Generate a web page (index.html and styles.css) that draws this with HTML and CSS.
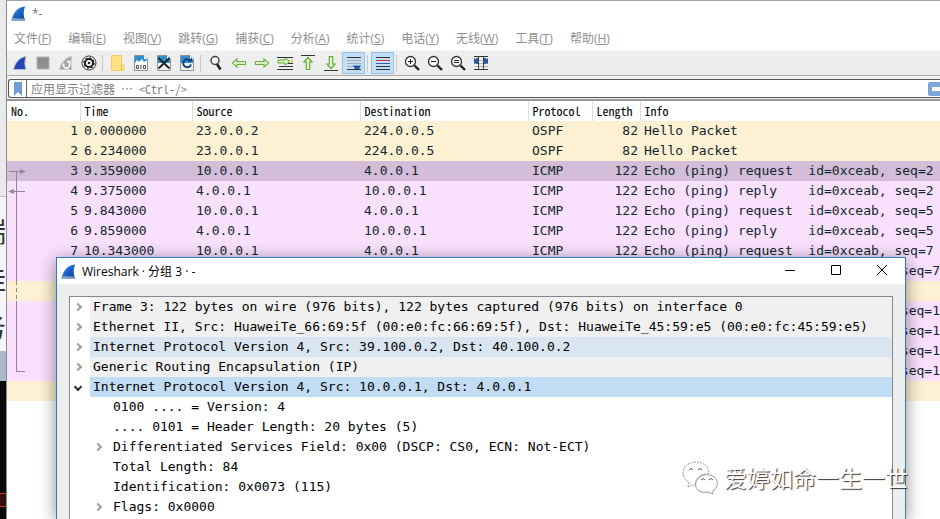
FILE: index.html
```html
<!DOCTYPE html>
<html lang="zh-CN">
<head>
    <meta charset="utf-8">
    <title>*-</title>
    <link rel="stylesheet" href="styles.css">
</head>
<body>
<svg class="defs" aria-hidden="true">
  <defs>
    <linearGradient id="blue" x1="0" y1="0" x2="1" y2="1">
      <stop offset="0" stop-color="#4fa3ee"/>
      <stop offset="0.5" stop-color="#1763c8"/>
      <stop offset="1" stop-color="#0a3f9c"/>
    </linearGradient>
    <symbol id="fin" viewBox="0 0 16 16">
      <path d="M0.500 15.500C2 8 6 1.500 15 0.500C13 5 13 10 15 15.500Z" fill="url(#blue)"/>
      <path d="M0.500 15.500L2 12.500C6 13.500 11 13 14.300 13.500L15 15.500Z" fill="#8a9cc0"/>
    </symbol>
    <symbol id="file" viewBox="0 0 16 16">
      <path d="M1.500 0.500H11L14.500 4V15.500H1.500Z" fill="#f4f6ee" stroke="#8b9398"/>
      <path d="M2 1H11L14 4V8H2Z" fill="#2f8fd0"/>
      <path d="M11 0.500V4H14.500Z" fill="#fff"/>
    </symbol>
    <symbol id="lens" viewBox="0 0 16 16">
      <circle cx="6.500" cy="6.500" r="5" fill="#fff" stroke="#333" stroke-width="1.300"/>
      <path d="M10.500 10.500L15 15" stroke="#222" stroke-width="2.400"/>
    </symbol>
    <symbol id="arrow" viewBox="0 0 16 16">
      <path d="M1.500 8L6 4V6.500H14.500V9.500H6V12Z" fill="#fff" stroke="#6ab33a" stroke-width="1.200"/>
      <path d="M4 8H13" stroke="#a9dc80"/>
    </symbol>
  </defs>
</svg>

<div class="screen">
  <div class="behind">
    <div class="behind-top"></div>
    <div class="behind-text"><span>端</span><span>挂</span><span>务</span></div>
    <div class="behind-bar"></div>
    <div class="behind-term"></div>
  </div>

  <main class="window">
    <header class="titlebar">
      <svg class="logo"><use href="#fin"/></svg>
      <span>*-</span>
    </header>

    <nav class="menu">
      <a href="#">文件(<u>F</u>)</a>
      <a href="#">编辑(<u>E</u>)</a>
      <a href="#">视图(<u>V</u>)</a>
      <a href="#">跳转(<u>G</u>)</a>
      <a href="#">捕获(<u>C</u>)</a>
      <a href="#">分析(<u>A</u>)</a>
      <a href="#">统计(<u>S</u>)</a>
      <a href="#">电话(<u>Y</u>)</a>
      <a href="#">无线(<u>W</u>)</a>
      <a href="#">工具(<u>T</u>)</a>
      <a href="#">帮助(<u>H</u>)</a>
    </nav>

    <div class="toolbar">
      <button type="button" aria-label="start"><svg viewBox="0 0 16 16"><path d="M1.500 14.500C3 8 7 2.500 14 1.500C12.500 6 12.500 10 14 14.500Z" fill="#2546b8" stroke="#b9bcc6"/></svg></button>
      <button type="button" aria-label="stop"><svg viewBox="0 0 16 16"><path d="M2 2H14V14H2Z" fill="#8e8e8e" stroke="#b5b5b5"/></svg></button>
      <button type="button" aria-label="restart"><svg viewBox="0 0 16 16"><path d="M1.500 14.500C3 8 7 2.500 14 1.500C12.500 6 12.500 10 14 14.500Z" fill="#a5a5a5" stroke="#c8c8c8"/><path d="M6 8.500A3 3 0 1 0 11 8.500M9 6.500H11.500V9" fill="none" stroke="#fff" stroke-width="1.500"/></svg></button>
      <button type="button" aria-label="options"><svg viewBox="0 0 16 16"><circle cx="8" cy="8" r="7" fill="#fff" stroke="#333"/><circle cx="8" cy="8" r="4" fill="none" stroke="#222" stroke-width="2"/><circle cx="8" cy="8" r="5" fill="none" stroke="#222" stroke-width="1.500" stroke-dasharray="2 1.900"/><circle cx="8" cy="8" r="1.300" fill="#222"/></svg></button>
      <span class="sep"></span>
      <button type="button" aria-label="open"><svg viewBox="0 0 16 16"><path d="M1.500 0.500H11.500V10H14V15.500H1.500Z" fill="#ffe082" stroke="#f0cc62"/><path d="M11.500 10V15.500" stroke="#dfb84c"/></svg></button>
      <button type="button" aria-label="save"><svg viewBox="0 0 16 16"><use href="#file"/><path d="M2 8L4 5L6 7L9 4L11 7L14 5V9H2Z" fill="#fff"/><path d="M3.500 10.500H5.500V13.500H3.500ZM8 10V14M10.500 10.500H12.500V13.500H10.500Z" fill="none" stroke="#555"/></svg></button>
      <button type="button" aria-label="close"><svg viewBox="0 0 16 16"><use href="#file"/><path d="M2.500 3L13.500 13.500M13.500 3L2.500 13.500" stroke="#222" stroke-width="2"/></svg></button>
      <button type="button" aria-label="reload"><svg viewBox="0 0 16 16"><use href="#file"/><path d="M11.500 6A4 4 0 1 0 12 9.500" fill="none" stroke="#153f7c" stroke-width="2"/><path d="M8.500 6.500H13V2.500Z" fill="#153f7c"/></svg></button>
      <span class="sep"></span>
      <button type="button" aria-label="find"><svg viewBox="0 0 16 16"><circle cx="7" cy="5.500" r="4" fill="#f4f4f4" stroke="#444" stroke-width="1.500"/><path d="M9 9L12.500 14.500" stroke="#222" stroke-width="2.500"/></svg></button>
      <button type="button" aria-label="back"><svg><use href="#arrow"/></svg></button>
      <button type="button" aria-label="forward"><svg viewBox="0 0 16 16"><g transform="rotate(180 8 8)"><use href="#arrow"/></g></svg></button>
      <button type="button" aria-label="go to"><svg viewBox="0 0 16 16"><path d="M0 2.500H16M2 11.500H16M0 14.500H16M11 8.500H16" stroke="#333"/><path d="M14 6H16" stroke="#e6cf3a" stroke-width="3"/><path d="M1 5H8V3L13 6.500L8 10V8H1Z" fill="#d9f0c8" stroke="#5fae2d"/></svg></button>
      <button type="button" aria-label="first"><svg viewBox="0 0 16 16"><path d="M1 0.500H15" stroke="#333"/><path d="M8 2.500L12 7H9.700V14.500H6.300V7H4Z" fill="#e8f7dc" stroke="#5fae2d" stroke-width="1.200"/></svg></button>
      <button type="button" aria-label="last"><svg viewBox="0 0 16 16"><path d="M1 15.500H15" stroke="#333"/><path d="M8 13.500L12 9H9.700V1.500H6.300V9H4Z" fill="#e8f7dc" stroke="#5fae2d" stroke-width="1.200"/></svg></button>
      <button type="button" class="on" aria-label="auto scroll"><svg viewBox="0 0 16 16"><path d="M1 2.500H15M1 14.500H15" stroke="#333"/><path d="M1 5.500H15M1 8.500H15M1 11.500H8" stroke="#a7adb0"/><path d="M7 10.500H15L13 14H9Z" fill="#2a56a8"/></svg></button>
      <span class="sep"></span>
      <button type="button" class="on" aria-label="colorize"><svg viewBox="0 0 16 16"><path d="M1 2.500H15M1 14.500H15M1 11.500H15" stroke="#333"/><path d="M1 5.500H15" stroke="#e02a3a"/><path d="M1 8.500H15" stroke="#3a58b8"/></svg></button>
      <span class="sep"></span>
      <button type="button" aria-label="zoom in"><svg viewBox="0 0 16 16"><use href="#lens"/><path d="M4 6.500H9M6.500 4V9" stroke="#222"/></svg></button>
      <button type="button" aria-label="zoom out"><svg viewBox="0 0 16 16"><use href="#lens"/><path d="M4 6.500H9" stroke="#222"/></svg></button>
      <button type="button" aria-label="normal size"><svg viewBox="0 0 16 16"><use href="#lens"/><path d="M4 5.500H9M4 7.500H9" stroke="#222"/></svg></button>
      <button type="button" aria-label="resize columns"><svg viewBox="0 0 16 16"><path d="M1 1.500H15M1 14.500H15" stroke="#333"/><path d="M1 5.500H15M1 8.500H15M1 11.500H15" stroke="#b5b5b5"/><path d="M5.500 1V15M10.500 1V15" stroke="#444"/><path d="M1 3L5 6L1 9ZM15 3L11 6L15 9ZM5 3V9H3V3ZM11 3V9H13V3Z" fill="#2d55aa"/></svg></button>
    </div>

    <form class="filter">
      <div class="filter-box">
        <button type="button" class="bookmark" aria-label="bookmarks"><svg viewBox="0 0 10 14"><path d="M1 0H9V14L5 10L1 14Z" fill="#6f9cd2"/></svg></button>
        <input type="text" aria-label="filter" placeholder="应用显示过滤器 … &lt;Ctrl-/&gt;">
        <button type="button" class="apply" aria-label="apply"></button>
      </div>
    </form>

    <div class="packets">
      <table>
        <colgroup>
          <col class="c-no"><col class="c-time"><col class="c-addr"><col class="c-addr"><col class="c-proto"><col class="c-len"><col>
        </colgroup>
        <thead>
          <tr><th>No.</th><th>Time</th><th>Source</th><th>Destination</th><th>Protocol</th><th>Length</th><th>Info</th></tr>
        </thead>
        <tbody>
          <tr class="ospf"><td>1</td><td>0.000000</td><td>23.0.0.2</td><td>224.0.0.5</td><td>OSPF</td><td>82</td><td>Hello Packet</td></tr>
          <tr class="ospf"><td>2</td><td>6.234000</td><td>23.0.0.1</td><td>224.0.0.5</td><td>OSPF</td><td>82</td><td>Hello Packet</td></tr>
          <tr class="icmp selected"><td>3</td><td>9.359000</td><td>10.0.0.1</td><td>4.0.0.1</td><td>ICMP</td><td>122</td><td>Echo (ping) request  id=0xceab, seq=2</td></tr>
          <tr class="icmp"><td>4</td><td>9.375000</td><td>4.0.0.1</td><td>10.0.0.1</td><td>ICMP</td><td>122</td><td>Echo (ping) reply    id=0xceab, seq=2</td></tr>
          <tr class="icmp"><td>5</td><td>9.843000</td><td>10.0.0.1</td><td>4.0.0.1</td><td>ICMP</td><td>122</td><td>Echo (ping) request  id=0xceab, seq=5</td></tr>
          <tr class="icmp"><td>6</td><td>9.859000</td><td>4.0.0.1</td><td>10.0.0.1</td><td>ICMP</td><td>122</td><td>Echo (ping) reply    id=0xceab, seq=5</td></tr>
          <tr class="icmp"><td>7</td><td>10.343000</td><td>10.0.0.1</td><td>4.0.0.1</td><td>ICMP</td><td>122</td><td>Echo (ping) request  id=0xceab, seq=7</td></tr>
          <tr class="icmp"><td></td><td></td><td></td><td></td><td></td><td></td><td class="tail">seq=7</td></tr>
          <tr class="ospf"><td></td><td></td><td></td><td></td><td></td><td></td><td></td></tr>
          <tr class="icmp"><td></td><td></td><td></td><td></td><td></td><td></td><td class="tail">seq=1</td></tr>
          <tr class="icmp"><td></td><td></td><td></td><td></td><td></td><td></td><td class="tail">seq=1</td></tr>
          <tr class="icmp"><td></td><td></td><td></td><td></td><td></td><td></td><td class="tail">seq=1</td></tr>
          <tr class="icmp"><td></td><td></td><td></td><td></td><td></td><td></td><td class="tail">seq=1</td></tr>
          <tr class="ospf"><td></td><td></td><td></td><td></td><td></td><td></td><td></td></tr>
        </tbody>
      </table>
      <!-- conversation marks in the No. column -->
      <svg class="related" viewBox="0 0 24 280" fill="none" stroke="#8d8699">
        <path d="M2 50.500H14M9.500 50V160M9.500 180V251M9 250.500H18M6 70.500H18"/>
        <path d="M9.500 160V180" stroke-dasharray="4 3"/>
        <path d="M13 48L19 50.500L13 53ZM7 68L1 70.500L7 73Z" fill="#8d8699" stroke="none"/>
      </svg>
    </div>
  </main>

  <section class="dialog">
    <header class="dialog-title">
      <svg class="logo"><use href="#fin"/></svg>
      <h1>Wireshark · 分组 3 · -</h1>
      <button type="button" aria-label="minimize"><svg viewBox="0 0 12 12"><path d="M1 5.500H11"/></svg></button>
      <button type="button" aria-label="maximize"><svg viewBox="0 0 12 12"><path d="M1.500 0.500H10.500V9.500H1.500Z"/></svg></button>
      <button type="button" aria-label="close"><svg viewBox="0 0 12 12"><path d="M1 0L11 10M11 0L1 10"/></svg></button>
    </header>
    <ul class="tree">
      <li class="proto closed"><span>Frame 3: 122 bytes on wire (976 bits), 122 bytes captured (976 bits) on interface 0</span></li>
      <li class="proto closed"><span>Ethernet II, Src: HuaweiTe_66:69:5f (00:e0:fc:66:69:5f), Dst: HuaweiTe_45:59:e5 (00:e0:fc:45:59:e5)</span></li>
      <li class="proto closed hover"><span>Internet Protocol Version 4, Src: 39.100.0.2, Dst: 40.100.0.2</span></li>
      <li class="proto closed"><span>Generic Routing Encapsulation (IP)</span></li>
      <li class="proto open current"><span>Internet Protocol Version 4, Src: 10.0.0.1, Dst: 4.0.0.1</span></li>
      <li class="field"><span>0100 .... = Version: 4</span></li>
      <li class="field"><span>.... 0101 = Header Length: 20 bytes (5)</span></li>
      <li class="field closed"><span>Differentiated Services Field: 0x00 (DSCP: CS0, ECN: Not-ECT)</span></li>
      <li class="field"><span>Total Length: 84</span></li>
      <li class="field"><span>Identification: 0x0073 (115)</span></li>
      <li class="field closed"><span>Flags: 0x0000</span></li>
    </ul>
  </section>

  <div class="watermark">
    <svg viewBox="0 0 38 34" fill="#fff" stroke="#999">
      <path d="M7 26L8 21.500C-2 15 1 2 14 1C24 0.500 29 8 27 13C20 12 13 18 15 24C13 24.500 12 24 11 24Z" stroke-dasharray="2 1"/>
      <path d="M32 33L27 31C18 33 13 27 15 21C18 12 33 11 36 20C37 25 35 28 32 29.500Z"/>
      <path d="M8 9Q10 6 12 9M17 9Q19 6 21 9M20 19Q22 16 24 19M28 19Q30 16 32 19" fill="none" stroke="#555"/>
    </svg>
    <span>爱婷如命一生一世</span>
  </div>
</div>
</body>
</html>
```

FILE: styles.css
```css
*,*::before {
  box-sizing: border-box;
}
body {
  margin: 0;
  font-family: "Open Sans", "Noto Sans CJK SC", sans-serif;
  font-size: 12px;
  overflow: hidden;
}
button {
  padding: 0;
  border: 0;
  background: none;
}
.defs {
  position: absolute;
  width: 0;
  height: 0;
}
.screen {
  position: relative;
  display: flex;
  height: 100vh;
  overflow: hidden;
}

/* what shows left of the window */
.behind {
  display: flex;
  flex-direction: column;
  flex: 0 0 6px;
  overflow: hidden;
  background: #f4f5f6;
}
.behind-top {
  flex: 0 0 197px;
  background: #e9eaec;
  border-bottom: 1px solid #c4c4c4;
}
.behind-text {
  display: flex;
  flex-direction: column;
  align-items: flex-end;
  flex: 0 0 153px;
  padding-top: 10px;
  font-size: 28px;
  line-height: 48px;
  color: #333;
}
.behind-bar {
  flex: 0 0 30px;
  background: #aab8cc;
}
.behind-term {
  flex: 1;
  background: linear-gradient(#0a0a0a 0 112px, #c33 112px 113px, #311 113px 125px, #c33 125px 126px, #0a0a0a 126px);
}

.window {
  flex: 1;
  min-width: 0;
  overflow: hidden;
  background: #fff;
  border-top: 1px solid #a3a3a3;
  border-left: 1px solid #8a8a8a;
}
.titlebar {
  display: flex;
  align-items: center;
  gap: 6px;
  height: 25px;
  padding-left: 4px;
  color: #777;
}
.logo {
  width: 15px;
  height: 15px;
}
.menu {
  display: flex;
  gap: 17px;
  height: 24px;
  padding-left: 7px;
  line-height: 26px;
}
.menu a {
  color: #8f8f8f;
  text-decoration: none;
  white-space: nowrap;
}

.toolbar {
  display: flex;
  align-items: center;
  height: 26px;
  padding-left: 1px;
  background: #eee;
  border-top: 1px solid #f6f6f6;
  border-bottom: 1px solid #a8a8a8;
}
.toolbar button {
  display: flex;
  align-items: center;
  justify-content: center;
  flex: 0 0 23px;
  height: 22px;
}
.toolbar svg {
  width: 16px;
  height: 16px;
}
.toolbar .on {
  background: #c3dff6;
  border: 1px solid #93c4ec;
}
.sep {
  flex: 0 0 1px;
  height: 17px;
  margin: 0 3px 0 2px;
  background: #c8c8c8;
}

.filter {
  height: 25px;
  padding: 3px 0 3px 1px;
  background: #f2f2f2;
  border-bottom: 2px solid #999;
}
.filter-box {
  display: flex;
  align-items: center;
  height: 19px;
  background: #fff;
  border: 1px solid #555;
  border-right: 0;
  border-radius: 3px 0 0 3px;
}
.bookmark {
  display: flex;
  align-items: center;
  justify-content: center;
  flex: 0 0 18px;
  height: 17px;
  border-right: 1px solid #666;
}
.bookmark svg {
  width: 10px;
  height: 14px;
}
.filter input {
  flex: 1;
  min-width: 0;
  height: 17px;
  padding: 0 4px;
  border: 0;
  outline: 0;
  font-family: "Noto Sans CJK SC", sans-serif;
  font-feature-settings: "hwid";
  font-size: 12px;
}
.filter input::placeholder {
  color: #808080;
}
.apply {
  flex: 0 0 12px;
  height: 14px;
  background: linear-gradient(#fff, #fff) 4px 5px / 8px 4px no-repeat #7ca6d8;
  border-radius: 2px 0 0 2px;
}

.packets {
  position: relative;
}
table {
  width: 100%;
  table-layout: fixed;
  border-collapse: collapse;
}
.c-no {
  width: 73px;
}
.c-time {
  width: 112px;
}
.c-addr {
  width: 168px;
}
.c-proto {
  width: 64px;
}
.c-len {
  width: 48px;
}
th,td {
  height: 20px;
  padding: 0 0 0 4px;
  overflow: hidden;
  text-align: left;
  white-space: pre;
}
th {
  border-right: 1px solid #ddd;
  font-family: "Noto Sans CJK SC", sans-serif;
  font-feature-settings: "hwid";
  font-size: 12px;
  font-weight: normal;
  line-height: 20px;
}
th:last-child {
  border-right: 0;
}
td {
  font-family: "DejaVu Sans Mono", monospace;
  font-size: 13px;
  line-height: 20px;
  color: #12272e;
}
td:nth-child(1),td:nth-child(6) {
  padding-right: 2px;
  text-align: right;
}
td.tail {
  text-align: right;
}
.ospf {
  background: #fdf0d3;
}
.icmp {
  background: #f9e0fd;
}
.selected {
  background: #d3bdd8;
}
.related {
  position: absolute;
  top: 20px;
  left: 0;
  width: 24px;
  height: 280px;
}

.dialog {
  position: absolute;
  top: 257px;
  right: 34px;
  bottom: 0;
  left: 56px;
  display: flex;
  flex-direction: column;
  background: #eee;
  border: 1px solid #2f7cc0;
  border-bottom: 0;
  box-shadow: 0 3px 16px rgba(0, 0, 0, 0.45);
}
.dialog-title {
  display: flex;
  align-items: center;
  height: 26px;
  padding-left: 4px;
  background: #fff;
}
.dialog-title h1 {
  flex: 1;
  margin: 0 0 0 6px;
  font-size: 12px;
  font-weight: normal;
}
.dialog-title button {
  display: flex;
  align-items: center;
  justify-content: center;
  width: 46px;
  height: 26px;
}
.dialog-title button svg {
  width: 12px;
  height: 12px;
  fill: none;
  stroke: #000;
}
.tree {
  flex: 1;
  margin: 12px 12px 0;
  padding: 0;
  overflow: hidden;
  list-style: none;
  background: #fff;
  border: 1px solid #828790;
  border-bottom: 0;
  font-family: "DejaVu Sans Mono", monospace;
  font-size: 13px;
  line-height: 20px;
}
.tree li {
  display: flex;
  height: 20px;
  white-space: pre;
}
.tree li::before {
  content: "";
  flex: 0 0 6px;
  height: 6px;
  margin: 7px 9px 0 5px;
}
.tree .field {
  padding-left: 20px;
}
.tree .closed::before {
  border-top: 2px solid #a0a0a0;
  border-right: 2px solid #a0a0a0;
  transform: rotate(45deg);
}
.tree .open::before {
  border-right: 2px solid #333;
  border-bottom: 2px solid #333;
  transform: rotate(45deg);
}
.tree span {
  flex: 1;
  padding-left: 3px;
}
.proto span {
  background: #f0f0f0;
}
.tree .hover span {
  background: #d9e6f1;
}
.tree .current span {
  background: #c2dcf3;
}

.watermark {
  position: absolute;
  right: 32px;
  bottom: 24px;
  display: flex;
  align-items: center;
  gap: 5px;
  font-size: 23px;
  line-height: 34px;
  color: #fff;
  text-shadow: 1px 1px 1px #333;
}
.watermark svg {
  width: 38px;
  height: 34px;
}
```
